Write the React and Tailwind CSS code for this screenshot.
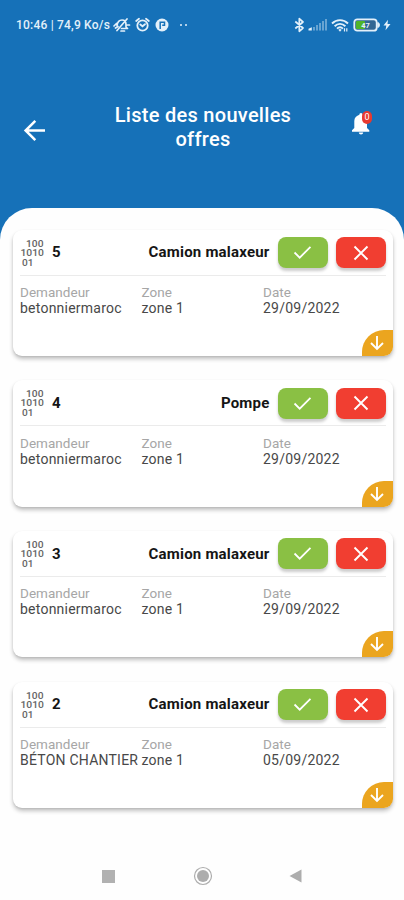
import { useState } from "react";

const initialOffers = [
  { id: 5, type: "Camion malaxeur", demandeur: "betonniermaroc", zone: "zone 1", date: "29/09/2022" },
  { id: 4, type: "Pompe", demandeur: "betonniermaroc", zone: "zone 1", date: "29/09/2022" },
  { id: 3, type: "Camion malaxeur", demandeur: "betonniermaroc", zone: "zone 1", date: "29/09/2022" },
  { id: 2, type: "Camion malaxeur", demandeur: "BÉTON CHANTIER", zone: "zone 1", date: "05/09/2022" },
];

// Barre de statut Android
function StatusBar() {
  return (
    <div className="flex h-[50px] items-center justify-between pl-4 pr-[13px] text-[#e3f0fa]">
      <div className="flex items-center">
        <span className="w-[97px] whitespace-nowrap text-[12px] font-medium tracking-[0.2px]">10:46 | 74,9 Ko/s</span>
        {/* Mode silencieux */}
        <svg width="18" height="16" viewBox="0 0 18 16" fill="none" stroke="currentColor" strokeWidth="1.7" strokeLinecap="round" strokeLinejoin="round">
          <path d="M4 8.500C4.500 5 6 3 9 3C12 3 13 5 13 7.500V10L14.500 11.500H8.500M4 13.500L14 2M8 14H11.500M1 9L3.500 6.500M2.500 11L5 9.500M14.500 8H16.500" />
        </svg>
        {/* Alarme */}
        <svg className="ml-1" width="15" height="16" viewBox="0 0 15 16" fill="none" stroke="currentColor" strokeWidth="1.8" strokeLinecap="round">
          <circle cx="7.500" cy="8.500" r="5.200" />
          <path d="M1.200 4L4 1.800M13.800 4L11 1.800M5.300 7.500L7.500 9.300L10 7.200" />
        </svg>
        {/* Application */}
        <svg className="ml-[5px]" width="14" height="14" viewBox="0 0 14 14">
          <circle cx="7" cy="7" r="6.500" fill="currentColor" />
          <path d="M5.200 11V4.200H9.500V7.300H7.200" fill="none" stroke="#1671b8" strokeWidth="1.500" />
        </svg>
        <span className="ml-[11px] size-[2px] rounded-full bg-current" />
        <span className="ml-[3px] size-[2px] rounded-full bg-current" />
      </div>
      <div className="flex items-center">
        {/* Bluetooth */}
        <svg width="11" height="16" viewBox="0 0 11 16" fill="none" stroke="currentColor" strokeWidth="1.700" strokeLinejoin="round">
          <path d="M1.300 4.500L9 11L5.300 14.300V1.700L9 5L1.300 11.500" />
        </svg>
        {/* Réseau */}
        <svg className="ml-[3px]" width="20" height="14" viewBox="0 0 20 14" fill="currentColor">
          <path d="M0.500 12.500V10.800L3.800 9.300V12.500Z" />
          <g opacity="0.4">
            <rect x="5" y="9" width="2" height="3.500" />
            <rect x="8" y="7" width="2" height="5.500" />
            <rect x="11" y="5" width="2" height="7.500" />
            <rect x="14" y="3" width="2" height="9.500" />
            <rect x="17" y="1" width="2" height="11.500" />
          </g>
        </svg>
        {/* Wifi */}
        <svg className="ml-[3px]" width="18" height="15" viewBox="0 0 18 15" fill="none" stroke="currentColor" strokeWidth="1.900">
          <path d="M1 5.500C5.500 1 12.500 1 17 5.500M3.600 8.200C6.800 5.200 11.200 5.200 14.400 8.200M6 10.600C7.800 9 10.200 9 12 10.600" />
          <path d="M7.300 11.800L9 13.800L10.700 11.800L9 11Z" fill="currentColor" stroke="none" />
          <path d="M13.500 10.300V13.500M15.800 13.500V10.300" strokeWidth="1.200" />
        </svg>
        {/* Batterie */}
        <svg className="ml-1" width="28" height="14" viewBox="0 0 28 14">
          <rect x="1.300" y="1.300" width="22.400" height="11.400" rx="3" fill="#326794" stroke="currentColor" strokeWidth="1.800" />
          <path d="M24.800 4.500C27 5 27 9 24.800 9.500Z" fill="currentColor" stroke="currentColor" />
          <rect x="3" y="3" width="9" height="8" rx="1" fill="#4fb52a" />
          <text x="12.500" y="9.800" textAnchor="middle" fontSize="7.500" fontWeight="700" fill="currentColor">47</text>
        </svg>
        <svg className="ml-[2px]" width="8" height="12" viewBox="0 0 8 12" fill="currentColor">
          <path d="M5 0.800L0.500 6.500H3.300L2.500 11.200L7.500 5H4.500Z" />
        </svg>
      </div>
    </div>
  );
}

function Header({ count }) {
  return (
    <header className="flex h-[158px] items-start pt-[54px] text-white">
      <button className="ml-[23px] mt-[15px]" aria-label="Retour">
        <svg width="24" height="24" viewBox="0 0 24 24" fill="none" stroke="currentColor" strokeWidth="2.500">
          <path d="M22 11.500H3M12.300 1.800L2.600 11.500L12.300 21.200" />
        </svg>
      </button>
      <h1 className="ml-[56px] w-[200px] text-center text-[20px] font-medium leading-[23.500px] tracking-[0.28px]">
        Liste des nouvelles offres
      </h1>
      <button className="relative ml-[47px] mt-[7px]" aria-label="Notifications">
        <svg width="22" height="26" viewBox="0 0 22 26" fill="currentColor">
          <path d="M11 2C12 2 12.600 2.800 12.600 3.800C15.500 4.700 17 7 17 10V17L19.300 19.300V20.700H2V19.300L4.300 17V10C4.300 7 6.500 4.700 9.400 3.800C9.400 2.800 10 2 11 2Z" />
          <path d="M8.800 21.500H13.200C13.200 24 8.800 24 8.800 21.500Z" />
        </svg>
        <span className="absolute left-[12px] top-0 flex h-[13px] w-[10px] items-center justify-center rounded-full bg-[#e83a30] text-[9px] leading-none">
          {count}
        </span>
      </button>
    </header>
  );
}

function BinaryIcon() {
  return (
    <svg width="25" height="30" viewBox="0 0 25 30" fill="#666" fontSize="9.500" fontWeight="500">
      <text x="6" y="9" textLength="17.500" lengthAdjust="spacingAndGlyphs">100</text>
      <text x="0.500" y="18.300" textLength="23.500" lengthAdjust="spacingAndGlyphs">1010</text>
      <text x="2" y="27.600" textLength="11.500" lengthAdjust="spacingAndGlyphs">01</text>
    </svg>
  );
}

function Field({ label, value }) {
  return (
    <div className="whitespace-nowrap">
      <div className="text-[13.500px] leading-4 tracking-[0.03px] text-[#a6a6a6]">{label}</div>
      <div className="text-[14px] leading-4 tracking-[0.23px] text-[#484848]">{value}</div>
    </div>
  );
}

function OfferCard({ offer }) {
  return (
    <article className="relative h-[126.500px] rounded-[9px] bg-white pl-[7.500px] pr-[7.500px] pt-[7.500px] shadow-[0_3px_4px_rgba(0,0,0,0.24),0_1px_2px_rgba(0,0,0,0.08)]">
      <div className="flex h-[38.500px] border-b border-[#ebebeb]">
        <div className="flex h-[31px] flex-1 items-center text-[15px] font-bold text-[#151515]">
          <BinaryIcon />
          <span className="ml-[7px]">{offer.id}</span>
          <span className="ml-auto mr-2 tracking-[0.2px]">{offer.type}</span>
        </div>
        <button className="flex h-[31px] w-[50px] items-center justify-center rounded-[8px] bg-[#8ac044] shadow-[0_3px_3px_rgba(0,0,0,0.2)]" aria-label="Accepter">
          <svg width="19" height="15" viewBox="0 0 20 16" fill="none" stroke="white" strokeWidth="1.900">
            <path d="M1.500 8L7 13.500L18.500 2" />
          </svg>
        </button>
        <button className="ml-2 flex h-[31px] w-[50px] items-center justify-center rounded-[8px] bg-[#f13e31] shadow-[0_3px_3px_rgba(0,0,0,0.2)]" aria-label="Refuser">
          <svg width="16" height="16" viewBox="0 0 16 16" fill="none" stroke="white" strokeWidth="1.900">
            <path d="M1.500 1.500L14.500 14.500M14.500 1.500L1.500 14.500" />
          </svg>
        </button>
      </div>
      <div className="grid grid-cols-[121.500px_121.500px_1fr] pt-[8.500px]">
        <Field label="Demandeur" value={offer.demandeur} />
        <Field label="Zone" value={offer.zone} />
        <Field label="Date" value={offer.date} />
      </div>
      <button className="absolute bottom-0 right-0 flex h-[26px] w-[31px] items-center justify-center rounded-br-[9px] rounded-tl-[22px] bg-[#eba51f] pr-0.5" aria-label="Détails">
        <svg width="16" height="16" viewBox="0 0 16 16" fill="none" stroke="white" strokeWidth="1.900">
          <path d="M8 1V14M2 8L8 14L14 8" />
        </svg>
      </button>
    </article>
  );
}

function NavBar() {
  return (
    <nav className="flex h-12 items-center justify-center text-[#adadad]">
      <span className="size-[13px] bg-[#b1b1b1]" />
      <svg className="ml-[78px]" width="20" height="20" viewBox="0 0 20 20">
        <circle cx="10" cy="10" r="8.500" fill="none" stroke="currentColor" strokeWidth="1.200" />
        <circle cx="10" cy="10" r="6" fill="currentColor" />
      </svg>
      <svg className="ml-[76px]" width="13" height="14" viewBox="0 0 13 14" fill="currentColor">
        <path d="M0.500 7L12.500 0.500V13.500Z" />
      </svg>
    </nav>
  );
}

export default function App() {
  const [offers] = useState(initialOffers);

  return (
    <div className="flex h-[900px] w-[404px] flex-col overflow-hidden bg-[#1671b8] font-['Roboto',sans-serif]">
      <StatusBar />
      <Header count={0} />
      <main className="flex flex-1 flex-col justify-between rounded-t-[32px] bg-[#fefefe]">
        <div className="flex flex-col gap-[24.200px] pl-[12.500px] pr-[11px] pt-[21.500px]">
          {offers.map((offer) => (
            <OfferCard key={offer.id} offer={offer} />
          ))}
        </div>
        <NavBar />
      </main>
    </div>
  );
}
